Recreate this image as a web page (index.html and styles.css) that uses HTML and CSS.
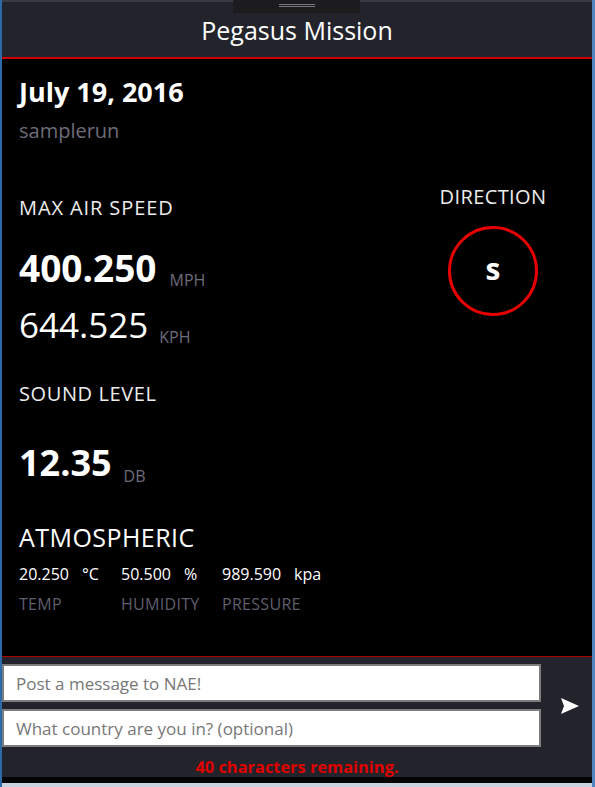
FILE: index.html
```html
<!DOCTYPE html>
<html lang="en">
<head>
<meta charset="utf-8">
<title>Pegasus Mission</title>
<link rel="stylesheet" href="styles.css">
</head>
<body>
<div class="window">
  <header class="header">
    <div class="grip"><span class="grip-line"></span><span class="grip-line"></span></div>
    <h1 class="title">Pegasus Mission</h1>
  </header>
  <main class="main">
    <section class="left">
      <div class="date">July 19, 2016</div>
      <div class="run">samplerun</div>
      <div class="label label-speed">MAX AIR SPEED</div>
      <div class="big big-mph">400.250<span class="unit unit-mph">MPH</span></div>
      <div class="mid">644.525<span class="unit unit-kph">KPH</span></div>
      <div class="label label-sound">SOUND LEVEL</div>
      <div class="big big-db">12.35<span class="unit unit-db">DB</span></div>
      <div class="atmo">ATMOSPHERIC</div>
      <div class="atmo-grid">
        <div class="val"><span>20.250</span><span>°C</span></div>
        <div class="val"><span>50.500</span><span>%</span></div>
        <div class="val"><span>989.590</span><span>kpa</span></div>
        <div class="cap">TEMP</div>
        <div class="cap">HUMIDITY</div>
        <div class="cap">PRESSURE</div>
      </div>
    </section>
    <section class="right">
      <div class="label label-dir">DIRECTION</div>
      <div class="compass">s</div>
    </section>
  </main>
  <footer class="footer">
    <div class="form">
      <div class="inputs">
        <input class="field" type="text" placeholder="Post a message to NAE!">
        <input class="field" type="text" placeholder="What country are you in? (optional)">
      </div>
      <div class="send">
        <svg width="18" height="16" viewBox="0 0 18 16" aria-hidden="true">
          <polygon points="0,0 18,8 0,16 3,8" fill="#ffffff"/>
        </svg>
      </div>
    </div>
    <div class="remaining">40 characters remaining.</div>
  </footer>
  <div class="strip-dark"></div>
  <div class="strip-light"></div>
</div>
</body>
</html>
```
FILE: styles.css
```css
* { box-sizing: border-box; }
html, body { margin: 0; padding: 0; background: #000; }
body { font-family: "Open Sans", "Noto Sans", sans-serif; color: #fff; }

.window {
  width: 595px;
  height: 787px;
  border-left: 2px solid #2b6aa6;
  border-right: 3px solid #4f86c0;
  display: flex;
  flex-direction: column;
  overflow: hidden;
}

.header {
  position: relative;
  height: 59px;
  background: #22232b;
  border-top: 2px solid #3a3b41;
  border-bottom: 2px solid #d00000;
  display: flex;
  justify-content: center;
}
.grip {
  position: absolute;
  left: 231px;
  top: -2px;
  width: 127px;
  height: 13px;
  background: #1c1c1e;
  display: flex;
  flex-direction: column;
  align-items: center;
  gap: 1px;
  padding-top: 4px;
}
.grip-line { display: block; width: 36px; height: 1px; background: #7a7a7a; }
.title {
  margin: 0;
  font-weight: 400;
  font-size: 25px;
  line-height: 34px;
  padding-top: 11px;
  color: #fff;
}

.main {
  flex: 1;
  display: flex;
  padding: 16px 0 0 17px;
  background: #000;
}
.left { flex: 1; }
.right {
  width: 198px;
  display: flex;
  flex-direction: column;
  align-items: center;
}

.date { font-size: 27px; font-weight: 700; line-height: 34px; }
.run { font-size: 20px; line-height: 28px; margin-top: 8px; color: #6d6c7a; }
.label { font-size: 20px; line-height: 28px; color: #ececec; letter-spacing: 0.9px; }
.label-speed { margin-top: 49px; }
.label-sound { margin-top: 33px; letter-spacing: 0.6px; }
.label-dir { margin-top: 108px; letter-spacing: 0.4px; }

.big { font-size: 37px; font-weight: 700; line-height: 44px; }
.big-mph { margin-top: 24px; }
.big-db { font-size: 36px; margin-top: 33px; }
.mid { font-size: 35px; line-height: 44px; margin-top: 13px; }
.unit {
  font-size: 16px;
  font-weight: 400;
  line-height: 16px;
  color: #6d6c7a;
  margin-left: 13px;
  vertical-align: -4px;
}
.unit-kph { vertical-align: -5px; margin-left: 11px; }
.unit-db { vertical-align: -6px; margin-left: 12px; }

.atmo { font-size: 25px; line-height: 32px; margin-top: 36px; letter-spacing: 0.45px; }
.atmo-grid {
  display: grid;
  grid-template-columns: 102px 101px auto;
  row-gap: 8px;
  margin-top: 10px;
  font-size: 16px;
  line-height: 22px;
}
.val { display: flex; gap: 13px; color: #fff; }
.cap { color: #5f5e6c; letter-spacing: 0.3px; }

.compass {
  margin-top: 15px;
  width: 90px;
  height: 90px;
  border: 3px solid #e60000;
  border-radius: 50%;
  display: flex;
  align-items: center;
  justify-content: center;
  font-size: 30px;
  font-weight: 700;
  line-height: 1;
  padding-bottom: 4px;
}

.footer {
  height: 121px;
  background: #22232b;
  border-top: 1px solid #b00000;
  padding-top: 7px;
}
.form { display: flex; }
.inputs { width: 539px; display: flex; flex-direction: column; gap: 7px; }
.field {
  display: block;
  width: 100%;
  height: 38px;
  margin: 0;
  border: 2px solid #7d7d7d;
  background: #fff;
  padding: 0 0 0 12px;
  font-family: "Open Sans", "Noto Sans", sans-serif;
  font-size: 17px;
  color: #333;
  outline: none;
}
.field::placeholder { color: #777; }
.send {
  flex: 1;
  display: flex;
  align-items: center;
  padding-left: 20px;
}
.send svg { display: block; }

.remaining {
  text-align: center;
  color: #e00000;
  font-weight: 700;
  font-size: 16.4px;
  line-height: 20px;
  margin-top: 10px;
}

.strip-dark { height: 6px; background: #050505; }
.strip-light { height: 4px; background: #c9d3de; }
```
